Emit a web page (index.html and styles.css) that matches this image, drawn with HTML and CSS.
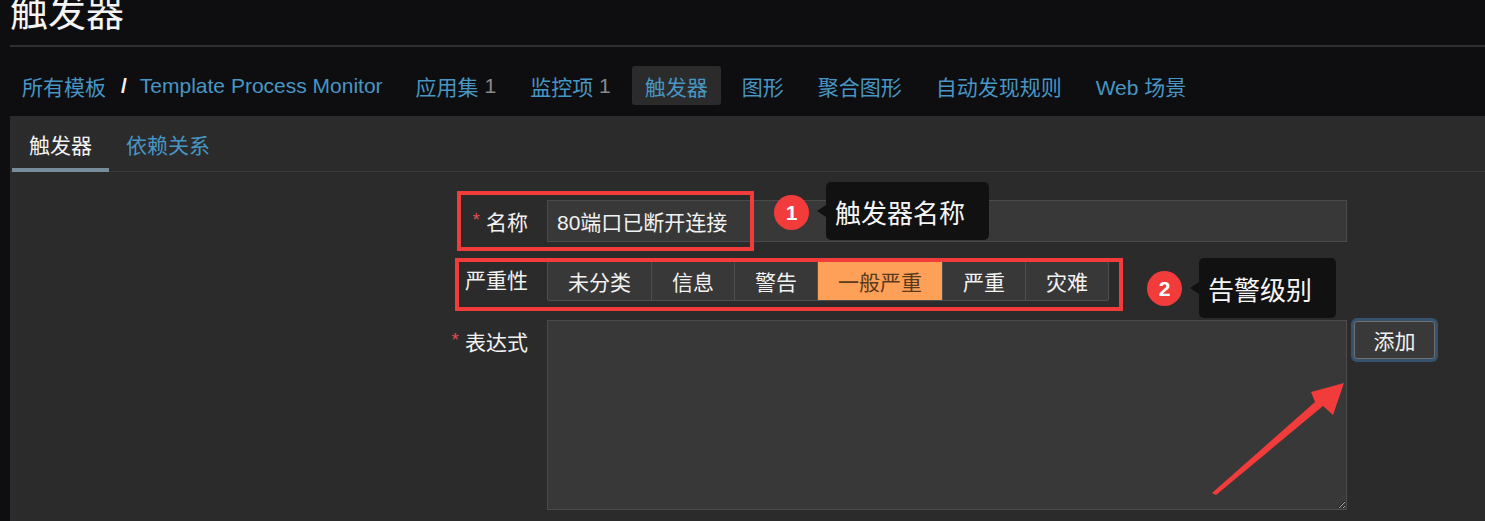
FILE: index.html
```html
<!DOCTYPE html>
<html lang="zh-CN">
<head>
<meta charset="utf-8">
<title>触发器</title>
<link rel="stylesheet" href="styles.css">
</head>
<body>
<div class="page">
  <header class="head"><h1 class="title">触发器</h1></header>

  <nav class="nav">
    <span class="nav-item crumb"><a class="link">所有模板</a><span class="sep">/</span><a class="link">Template Process Monitor</a></span>
    <a class="nav-item link">应用集 <span class="count">1</span></a>
    <a class="nav-item link">监控项 <span class="count">1</span></a>
    <a class="nav-item link active">触发器</a>
    <a class="nav-item link">图形</a>
    <a class="nav-item link">聚合图形</a>
    <a class="nav-item link">自动发现规则</a>
    <a class="nav-item link">Web 场景</a>
  </nav>

  <section class="panel">
    <div class="tabs">
      <span class="tab tab-active">触发器</span>
      <span class="tab">依赖关系</span>
    </div>

    <form class="form">
      <label class="label req">名称</label>
      <div class="field"><input class="text-input" type="text" value="80端口已断开连接"></div>
      <div class="extra"></div>

      <label class="label">严重性</label>
      <div class="field">
        <div class="seg">
          <span class="seg-item">未分类</span>
          <span class="seg-item">信息</span>
          <span class="seg-item">警告</span>
          <span class="seg-item seg-on">一般严重</span>
          <span class="seg-item">严重</span>
          <span class="seg-item">灾难</span>
        </div>
      </div>
      <div class="extra"></div>

      <label class="label req label-top">表达式</label>
      <div class="field"><textarea class="area"></textarea></div>
      <div class="extra"><button type="button" class="btn">添加</button></div>
    </form>
  </section>

  <div class="mark mark-1"></div>
  <div class="mark mark-2"></div>
  <div class="badge badge-1">1</div>
  <div class="badge badge-2">2</div>
  <div class="tip tip-1">触发器名称</div>
  <div class="tip tip-2">告警级别</div>
  <svg class="arrow" width="1485" height="521" viewBox="0 0 1485 521">
    <polygon fill="#f23b3b" points="1212,493 1315,402 1311,392 1344,383 1333,415 1323,406 1216,495"/>
  </svg>
</div>
</body>
</html>
```

FILE: styles.css
```css
* { box-sizing: border-box; }

html, body {
  margin: 0;
  padding: 0;
  background: #0e0e10;
}

body {
  font-family: "Liberation Sans", "Noto Sans CJK SC", sans-serif;
  color: #f2f2f2;
  overflow: hidden;
}

.page {
  position: relative;
  width: 1485px;
  height: 521px;
}

/* Title */
.head {
  display: flow-root;
  height: 47px;
  margin-left: 10px;
  border-bottom: 2px solid #2f2f2f;
}

.title {
  margin: -6px 0 0;
  font-size: 38px;
  line-height: 38px;
  font-weight: normal;
  color: #f4f4f4;
}

/* Navigation */
.nav {
  display: flex;
  align-items: center;
  gap: 8px;
  padding: 19px 0 11px 9px;
  font-size: 21px;
}

.nav-item {
  display: flex;
  align-items: center;
  height: 39px;
  padding: 0 13px;
  border-radius: 3px;
  white-space: pre;
}

.crumb {
  margin-right: -1px;
}

.link {
  color: #4796c4;
  text-decoration: none;
}

.sep {
  margin: 0 13px 0 15px;
  color: #f2f2f2;
  font-weight: bold;
}

.count {
  color: #8a8a8a;
}

.active {
  background: #2b2b2b;
}

/* Panel */
.panel {
  margin-left: 10px;
  background: #2b2b2b;
  height: 410px;
}

.tabs {
  display: flex;
  height: 56px;
  padding-left: 2px;
  border-bottom: 1px solid #3b3b3b;
  font-size: 21px;
}

.tab {
  padding: 18px 17px 0;
  line-height: 24px;
  height: 56px;
  color: #4796c4;
}

.tab-active {
  color: #f4f4f4;
  border-bottom: 4px solid #798c99;
}

/* Form */
.form {
  display: grid;
  grid-template-columns: 537px 800px auto;
  row-gap: 19px;
  padding-top: 28px;
  font-size: 21px;
}

.label {
  align-self: center;
  text-align: right;
  padding-right: 19px;
  line-height: 24px;
  color: #f2f2f2;
}

.label-top {
  align-self: start;
  padding-top: 8px;
}

.req::before {
  content: "*";
  color: #e04f4f;
  font-size: 19px;
  vertical-align: 4px;
  margin-right: 6px;
}

.text-input {
  display: block;
  width: 800px;
  height: 42px;
  padding: 0 9px;
  background: #383838;
  border: 1px solid #4b4b4b;
  color: #f2f2f2;
  font: 21px "Liberation Sans", "Noto Sans CJK SC", sans-serif;
  outline: none;
}

.seg {
  display: inline-flex;
  height: 40px;
  border: 1px solid #4e4e4e;
  border-radius: 2px;
  background: #383838;
}

.seg-item {
  display: flex;
  align-items: center;
  padding: 0 20px;
  border-right: 1px solid #4e4e4e;
  color: #f2f2f2;
}

.seg-item:last-child {
  border-right: 0;
}

.seg-on {
  background: #ffa059;
  color: #5a3a1c;
}

.area {
  display: block;
  width: 800px;
  height: 190px;
  background: #383838;
  border: 1px solid #4b4b4b;
  color: #f2f2f2;
  resize: both;
  outline: none;
}

.btn {
  display: block;
  margin: 1px 0 0 7px;
  width: 81px;
  height: 38px;
  background: #393939;
  border: 1px solid #707070;
  border-radius: 3px;
  box-shadow: 0 0 0 3px #35536d;
  color: #f2f2f2;
  font: 21px "Liberation Sans", "Noto Sans CJK SC", sans-serif;
  padding: 0;
}

/* Annotations (overlay) */
.mark {
  position: absolute;
  border: 4px solid #f23b3b;
}

.mark-1 { left: 457px; top: 191px; width: 297px; height: 60px; }
.mark-2 { left: 455px; top: 258px; width: 668px; height: 53px; }

.badge {
  position: absolute;
  width: 35px;
  height: 35px;
  border-radius: 50%;
  background: #f23b3b;
  color: #fff;
  font-size: 21px;
  font-weight: bold;
  line-height: 35px;
  text-align: center;
}

.badge-1 { left: 774px; top: 195px; }
.badge-2 { left: 1147px; top: 271px; }

.tip {
  position: absolute;
  display: flex;
  align-items: center;
  padding-left: 9px;
  background: #111111;
  border-radius: 5px;
  color: #f6f6f6;
  font-size: 26px;
}

.tip::before {
  content: "";
  position: absolute;
  left: -9px;
  top: 50%;
  margin-top: -6px;
  border-style: solid;
  border-width: 6px 9px 6px 0;
  border-color: transparent #111111 transparent transparent;
}

.tip-1 { left: 826px; top: 182px; width: 163px; height: 58px; }
.tip-2 { left: 1199px; top: 258px; width: 137px; height: 60px; }

.arrow {
  position: absolute;
  left: 0;
  top: 0;
  pointer-events: none;
}
```
